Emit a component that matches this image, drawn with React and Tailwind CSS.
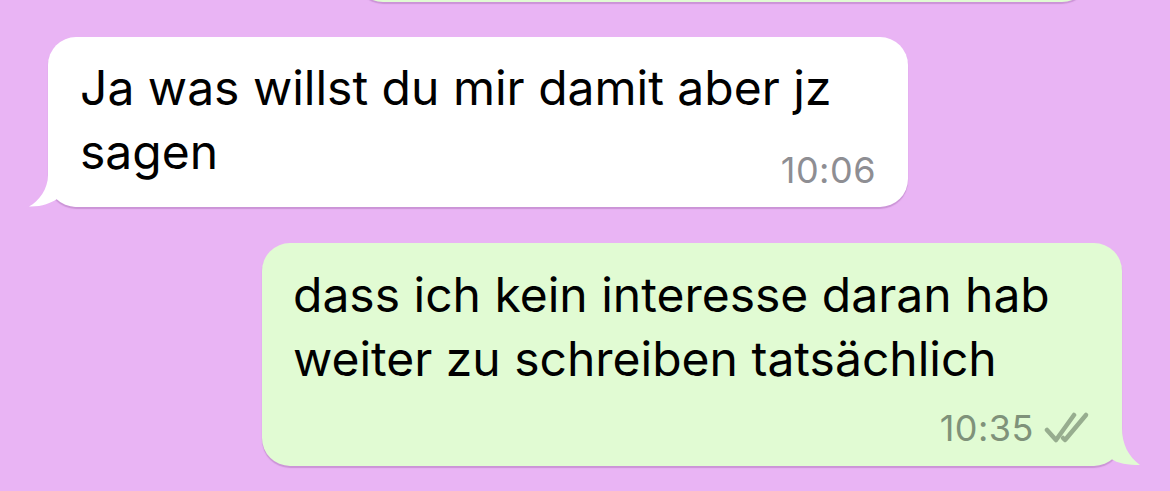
import React from 'react';

const DoubleCheck = () => (
  <svg width="46" height="34" viewBox="0 0 46 34" fill="none" stroke="#97ad8f" strokeWidth="4.5" strokeLinecap="round" strokeLinejoin="round">
    <path d="M3 19 L12 29 L30 4" />
    <path d="M19 27 L21 29 L42 4" />
  </svg>
);

const InTail = () => (
  <svg className="absolute -left-[19px] bottom-0" width="50" height="46" viewBox="0 0 50 46">
    <path d="M19 0 L19 14 C19 28 10 40 0 45.5 C12 46 22 42 28 38 C34 42 40 45 50 46 L50 0 Z" fill="#ffffff" />
  </svg>
);

const OutTail = () => (
  <svg className="absolute -right-[18px] bottom-0" width="60" height="48" viewBox="0 0 60 48">
    <path d="M42 0 L42 10 C42 26 48 38 60 47 C48 47 38 46 30 40 C24 44 16 46 0 48 L0 0 Z" fill="#e1fbd3" />
  </svg>
);

export default function App() {
  return (
    <div className="h-[491px] w-[1170px] overflow-hidden bg-[#e9b4f4]" style={{ fontFamily: 'Inter, "Liberation Sans", sans-serif' }}>
      {/* previous outgoing bubble, only its bottom edge shows */}
      <div className="ml-[355px] -mt-[60px] h-[62px] w-[735px] rounded-[28px] bg-[#e1fbd3] shadow-[0_2px_1px_rgba(150,90,160,0.35)]" />

      <div className="mt-[35px] ml-[48px] relative w-[860px] rounded-[28px] bg-white shadow-[0_2px_1px_rgba(150,90,160,0.35)] pl-[32px] pr-[32px] pt-[19px] pb-[19px]">
        <InTail />
        <p className="relative text-[48px] leading-[64px] text-black">Ja was willst du mir damit aber jz<br />sagen</p>
        <div className="relative -mt-[32px] flex h-[36px] items-center justify-end text-[36px] tracking-[0.5px] text-[#8e8e93]">10:06</div>
      </div>

      <div className="mt-[36px] ml-[262px] relative w-[860px] rounded-[28px] bg-[#e1fbd3] shadow-[0_2px_1px_rgba(150,90,160,0.35)] pl-[31px] pr-[32px] pt-[20px] pb-[20px]">
        <OutTail />
        <p className="relative text-[48px] leading-[64px] text-black">dass ich kein interesse daran hab<br />weiter zu schreiben tatsächlich</p>
        <div className="relative mt-[19px] flex h-[36px] items-center justify-end gap-[10px] text-[36px] tracking-[0.5px] text-[#7f927a]">
          <span>10:35</span>
          <DoubleCheck />
        </div>
      </div>
    </div>
  );
}
